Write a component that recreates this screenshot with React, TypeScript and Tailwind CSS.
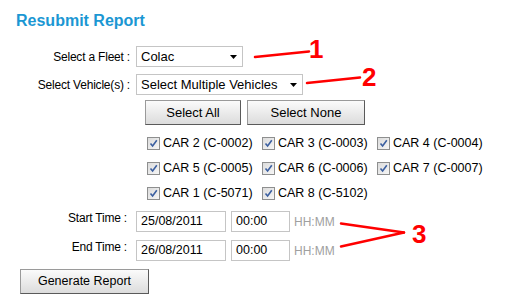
import React from "react";

const cars = [
  "CAR 2 (C-0002)",
  "CAR 3 (C-0003)",
  "CAR 4 (C-0004)",
  "CAR 5 (C-0005)",
  "CAR 6 (C-0006)",
  "CAR 7 (C-0007)",
  "CAR 1 (C-5071)",
  "CAR 8 (C-5102)",
];

function FakeSelect({ value, width }: { value: string; width: string }) {
  return (
    <div
      className={`flex h-[21px] items-center justify-between border border-[#c5c5c5] bg-white pl-[4px] pr-[5px] text-[13px] text-black ${width}`}
    >
      <span>{value}</span>
      <svg width="7" height="4" viewBox="0 0 7 4">
        <path d="M0 0H7L3.5 4Z" fill="#000" />
      </svg>
    </div>
  );
}

function Btn({ children, width }: { children: React.ReactNode; width: string }) {
  return (
    <button
      className={`h-[25px] border border-[#9a9a9a] border-b-[#5a5a5a] border-r-[#5a5a5a] bg-gradient-to-b from-[#fbfbfb] to-[#dcdcdc] text-[13px] text-black ${width}`}
    >
      {children}
    </button>
  );
}

function Check({ label }: { label: string }) {
  return (
    <div className="flex h-[25px] items-center gap-[3px]">
      <span className="flex h-[13px] w-[13px] items-center justify-center border border-[#8e8f8f] bg-gradient-to-br from-[#dcdcdc] to-[#f6f6f6]">
        <svg width="9" height="9" viewBox="0 0 9 9">
          <path d="M1.5 4.5L3.6 7L7.8 1.2" stroke="#3b5fa0" strokeWidth="1.6" fill="none" />
        </svg>
      </span>
      <span className="text-[12.5px] text-black">{label}</span>
    </div>
  );
}

function TextBox({ value, width }: { value: string; width: string }) {
  return (
    <div
      className={`flex h-[21px] items-end border border-[#c5c5c5] bg-white pb-[2px] pl-[4px] text-[12.5px] leading-[15px] text-black ${width}`}
    >
      {value}
    </div>
  );
}

export default function App() {
  return (
    <div
      className="relative h-[305px] w-[521px] overflow-hidden bg-white"
      style={{ fontFamily: '"Liberation Sans", Arial, sans-serif' }}
    >
      <h1 className="ml-[16px] mt-[11px] h-[19px] text-[16px] font-bold leading-[19px] text-[#1b97d3]">
        Resubmit Report
      </h1>

      <div className="mt-[16px] flex items-center">
        <div className="w-[131px] pr-[1px] text-right text-[12px] tracking-[-0.2px] text-black">
          Select a Fleet :
        </div>
        <div className="ml-[5px]">
          <FakeSelect value="Colac" width="w-[107px]" />
        </div>
      </div>

      <div className="mt-[7px] flex items-center">
        <div className="w-[131px] pr-[1px] text-right text-[12px] tracking-[-0.2px] text-black">
          Select Vehicle(s) :
        </div>
        <div className="ml-[5px]">
          <FakeSelect value="Select Multiple Vehicles" width="w-[167px]" />
        </div>
      </div>

      <div className="ml-[145px] mt-[5px] flex gap-[6px]">
        <Btn width="w-[96px]">Select All</Btn>
        <Btn width="w-[118px]">Select None</Btn>
      </div>

      <div className="ml-[147px] mt-[6px] grid w-[345px] grid-cols-3">
        {cars.map((c) => (
          <Check key={c} label={c} />
        ))}
      </div>

      <div className="mt-[5px] flex items-start">
        <div className="w-[127px] text-right text-[12px] leading-[14px] tracking-[-0.2px] text-black">
          Start Time :
        </div>
        <div className="ml-[9px] flex items-center gap-[5px]">
          <TextBox value="25/08/2011" width="w-[90px]" />
          <TextBox value="00:00" width="w-[59px]" />
          <span className="ml-[-1px] text-[12px] text-[#a0a0a0]">HH:MM</span>
        </div>
      </div>

      <div className="mt-[8px] flex items-start">
        <div className="w-[127px] text-right text-[12px] leading-[14px] tracking-[-0.2px] text-black">
          End Time :
        </div>
        <div className="ml-[9px] flex items-center gap-[5px]">
          <TextBox value="26/08/2011" width="w-[90px]" />
          <TextBox value="00:00" width="w-[59px]" />
          <span className="ml-[-1px] text-[12px] text-[#a0a0a0]">HH:MM</span>
        </div>
      </div>

      <div className="ml-[20px] mt-[7px]">
        <button className="h-[25px] w-[129px] border border-[#9a9a9a] border-b-[#5a5a5a] border-r-[#5a5a5a] bg-gradient-to-b from-[#fbfbfb] to-[#dcdcdc] text-[12.5px] text-black">
          Generate Report
        </button>
      </div>

      {/* red callouts */}
      <svg
        className="pointer-events-none absolute left-0 top-0"
        width="521"
        height="305"
        viewBox="0 0 521 305"
      >
        <g stroke="#ff0000" strokeWidth="2.5" strokeLinecap="round" fill="none">
          <line x1="255" y1="57" x2="309" y2="51.5" />
          <line x1="307" y1="83" x2="360" y2="77.5" />
          <line x1="341" y1="223.5" x2="404" y2="232.5" />
          <line x1="341" y1="246.5" x2="404" y2="232.5" />
        </g>
      </svg>
      <span className="absolute left-[309px] top-[36px] text-[26px] font-bold leading-[26px] text-[#ff0000]">
        1
      </span>
      <span className="absolute left-[362px] top-[64px] text-[26px] font-bold leading-[26px] text-[#ff0000]">
        2
      </span>
      <span className="absolute left-[412px] top-[221px] text-[26px] font-bold leading-[26px] text-[#ff0000]">
        3
      </span>
    </div>
  );
}
